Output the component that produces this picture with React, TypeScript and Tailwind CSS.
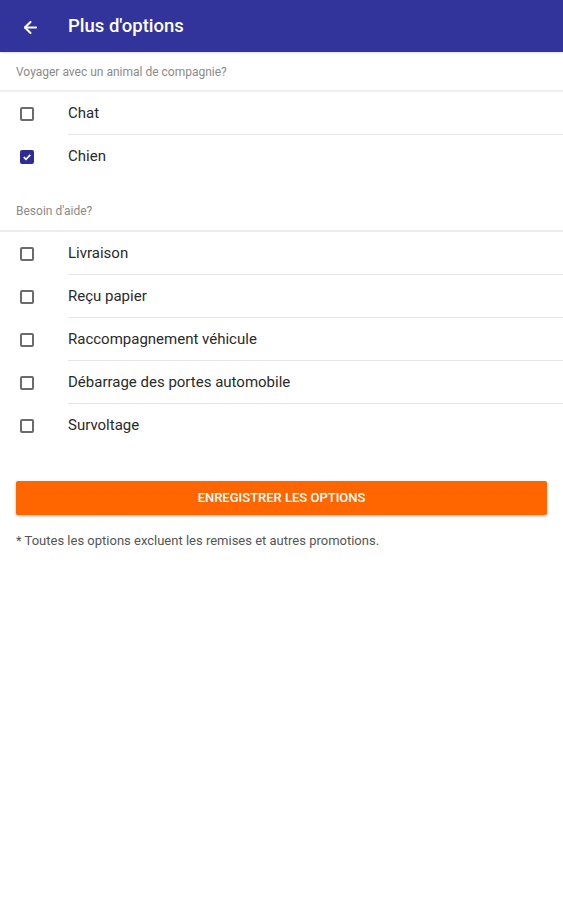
import { ArrowLeft } from "lucide-react";

const pets = [
  { label: "Chat", checked: false },
  { label: "Chien", checked: true },
];

const help = [
  { label: "Livraison", checked: false },
  { label: "Reçu papier", checked: false },
  { label: "Raccompagnement véhicule", checked: false },
  { label: "Débarrage des portes automobile", checked: false },
  { label: "Survoltage", checked: false },
];

function Box({ checked }: { checked: boolean }) {
  if (checked) {
    return (
      <div className="w-[14px] h-[14px] rounded-[2px] bg-[#2d2d94] flex items-center justify-center">
        <svg width="10" height="10" viewBox="0 0 10 10">
          <path d="M1.8 5.2 L4 7.3 L8.3 2.8" stroke="white" strokeWidth="1.8" fill="none" />
        </svg>
      </div>
    );
  }
  return <div className="w-[14px] h-[14px] rounded-[2px] border-2 border-[#6b6b6b]" />;
}

function Row({ label, checked, last }: { label: string; checked: boolean; last: boolean }) {
  return (
    <div className="flex h-[43px] items-stretch">
      <div className="w-[68px] flex items-center pl-[20px]">
        <Box checked={checked} />
      </div>
      <div className={"flex-1 flex items-center text-[15px] text-[#2a2a2a] " + (last ? "" : "border-b border-[#e6e6e6]")}>
        {label}
      </div>
    </div>
  );
}

export default function App() {
  return (
    <div className="w-[563px] h-[900px] bg-white" style={{ fontFamily: "Roboto, 'Liberation Sans', sans-serif" }}>
      <div className="h-[52px] bg-[#32339b] flex items-center pt-[2px] text-white shadow-sm">
        <ArrowLeft className="ml-[21px] w-[19px] h-[19px]" strokeWidth={2.6} />
        <span className="ml-[28px] text-[18.5px] font-medium">Plus d'options</span>
      </div>
      <div className="h-[40px] flex items-center px-[16px] pt-[1px] text-[12px] text-[#8a8a8a] border-b-2 border-[#f0f0f0]">
        Voyager avec un animal de compagnie?
      </div>
      {pets.map((p, i) => (
        <Row key={p.label} label={p.label} checked={p.checked} last={i === pets.length - 1} />
      ))}
      <div className="h-[54px] flex items-center px-[16px] pt-[14px] text-[12px] text-[#8a8a8a] border-b-2 border-[#ececec]">
        Besoin d'aide?
      </div>
      {help.map((p, i) => (
        <Row key={p.label} label={p.label} checked={p.checked} last={i === help.length - 1} />
      ))}
      <div className="px-[16px] pt-[34px]">
        <button className="w-full h-[34px] bg-[#ff6600] text-white text-[13px] font-medium rounded-[2px] shadow-[0_1px_3px_rgba(0,0,0,0.3)]">
          ENREGISTRER LES OPTIONS
        </button>
        <p className="mt-[16px] text-[13px] text-[#555]">* Toutes les options excluent les remises et autres promotions.</p>
      </div>
    </div>
  );
}
